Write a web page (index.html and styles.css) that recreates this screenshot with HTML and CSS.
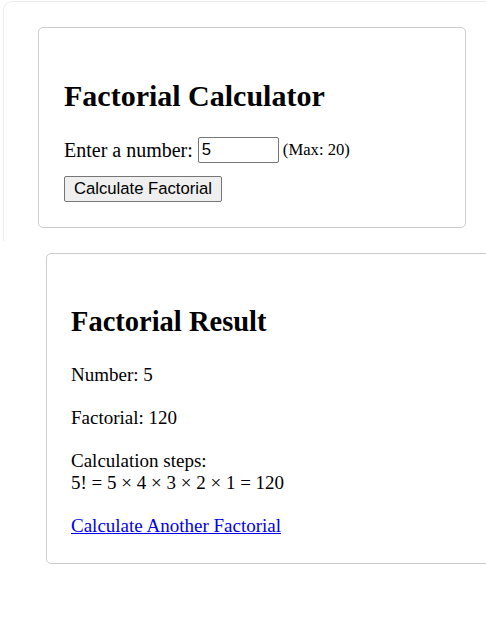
FILE: index.html
```html
<!DOCTYPE html>
<html>
<head>
<meta charset="utf-8">
<title>Factorial Calculator</title>
<link rel="stylesheet" href="styles.css">
</head>
<body>
<div class="frame">
  <div class="card card-form">
    <h1 class="title">Factorial Calculator</h1>
    <form class="form">
      <div class="field">
        <label for="num" class="label">Enter a number:</label>
        <input id="num" class="input" type="text" value="5">
        <small class="hint">(Max: 20)</small>
      </div>
      <button type="button" class="btn">Calculate Factorial</button>
    </form>
  </div>
</div>
<div class="card card-result">
  <h1 class="title title-result">Factorial Result</h1>
  <p class="line">Number: 5</p>
  <p class="line">Factorial: 120</p>
  <p class="line">Calculation steps:<br>5! = 5 × 4 × 3 × 2 × 1 = 120</p>
  <a class="link" href="#">Calculate Another Factorial</a>
</div>
</body>
</html>
```
FILE: styles.css
```css
html, body {
  margin: 0;
  padding: 0;
  overflow: hidden;
  background: #fff;
}
body {
  font-family: "Liberation Serif", "Times New Roman", serif;
  color: #000;
}
.frame {
  box-sizing: border-box;
  margin: 1px 0 0 3px;
  width: 540px;
  height: 240px;
  border: 1px solid #ececec;
  border-bottom: none;
  border-radius: 9px 0 0 0;
  padding: 25px 0 0 34px;
}
.card {
  box-sizing: border-box;
  border: 1px solid #cccccc;
  border-radius: 5px;
  background: #fff;
}
.card-form {
  width: 428px;
  padding: 25px;
}
.title {
  font-size: 30px;
  line-height: 34px;
  font-weight: bold;
  margin: 26px 0 24px;
}
.field {
  display: flex;
  align-items: center;
  height: 26px;
  font-size: 20px;
}
.label {
  margin-right: 5px;
}
.input {
  box-sizing: border-box;
  width: 81px;
  height: 26px;
  border: 1px solid #767676;
  border-radius: 2px;
  padding: 1px 3px;
  font-family: "Liberation Sans", Arial, sans-serif;
  font-size: 16.67px;
  margin: 0 4px 0 0;
}
.hint {
  font-size: 16.67px;
}
.btn {
  display: block;
  box-sizing: border-box;
  height: 26px;
  margin-top: 13px;
  padding: 0 9px;
  border: 1px solid #767676;
  border-radius: 2px;
  background: #efefef;
  font-family: "Liberation Sans", Arial, sans-serif;
  font-size: 16.67px;
  color: #000;
}
.card-result {
  margin: 12px 0 0 46px;
  width: 480px;
  padding: 24px 24px 26px;
}
.title-result {
  font-size: 28.5px;
  line-height: 33px;
  margin: 27px 0 26px;
}
.line {
  font-size: 19px;
  line-height: 22px;
  margin: 0 0 21px;
}
.link {
  display: block;
  font-size: 19px;
  line-height: 22px;
  color: #0000ee;
  text-decoration: underline;
}
```
